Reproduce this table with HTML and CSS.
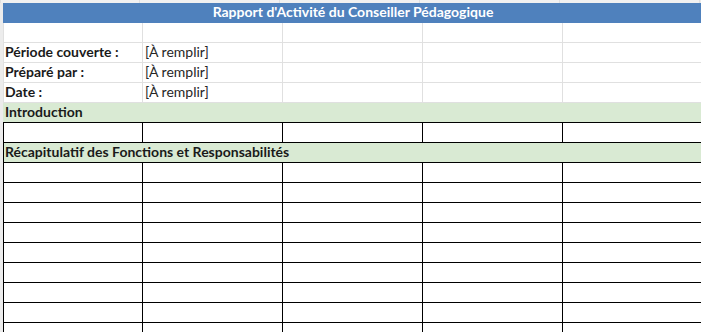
FILE: index.html
```html
<!DOCTYPE html>
<html lang="fr">
<head>
<meta charset="utf-8">
<title>Rapport d'Activité du Conseiller Pédagogique</title>
<link rel="stylesheet" href="styles.css">
</head>
<body>
<div class="sheet">
  <div class="row top">
    <div class="cell"></div><div class="cell"></div><div class="cell"></div><div class="cell"></div><div class="cell"></div>
  </div>
  <div class="row">
    <div class="title">Rapport d'Activité du Conseiller Pédagogique</div>
  </div>
  <div class="row">
    <div class="cell"></div><div class="cell"></div><div class="cell"></div><div class="cell"></div><div class="cell"></div>
  </div>
  <div class="row">
    <div class="cell label">Période couverte :</div><div class="cell value">[À remplir]</div><div class="cell"></div><div class="cell"></div><div class="cell"></div>
  </div>
  <div class="row">
    <div class="cell label">Préparé par :</div><div class="cell value">[À remplir]</div><div class="cell"></div><div class="cell"></div><div class="cell"></div>
  </div>
  <div class="row">
    <div class="cell label">Date :</div><div class="cell value">[À remplir]</div><div class="cell"></div><div class="cell"></div><div class="cell"></div>
  </div>
  <div class="row">
    <div class="section intro">Introduction</div>
  </div>
  <div class="row boxed">
    <div class="cell"></div><div class="cell"></div><div class="cell"></div><div class="cell"></div><div class="cell"></div>
  </div>
  <div class="row">
    <div class="section recap">Récapitulatif des Fonctions et Responsabilités</div>
  </div>
  <div class="row boxed"><div class="cell"></div><div class="cell"></div><div class="cell"></div><div class="cell"></div><div class="cell"></div></div>
  <div class="row boxed"><div class="cell"></div><div class="cell"></div><div class="cell"></div><div class="cell"></div><div class="cell"></div></div>
  <div class="row boxed"><div class="cell"></div><div class="cell"></div><div class="cell"></div><div class="cell"></div><div class="cell"></div></div>
  <div class="row boxed"><div class="cell"></div><div class="cell"></div><div class="cell"></div><div class="cell"></div><div class="cell"></div></div>
  <div class="row boxed"><div class="cell"></div><div class="cell"></div><div class="cell"></div><div class="cell"></div><div class="cell"></div></div>
  <div class="row boxed"><div class="cell"></div><div class="cell"></div><div class="cell"></div><div class="cell"></div><div class="cell"></div></div>
  <div class="row boxed"><div class="cell"></div><div class="cell"></div><div class="cell"></div><div class="cell"></div><div class="cell"></div></div>
  <div class="row boxed"><div class="cell"></div><div class="cell"></div><div class="cell"></div><div class="cell"></div><div class="cell"></div></div>
  <div class="row boxed"><div class="cell"></div><div class="cell"></div><div class="cell"></div><div class="cell"></div><div class="cell"></div></div>
</div>
</body>
</html>
```
FILE: styles.css
```css
html, body {
  margin: 0;
  padding: 0;
  background: #ffffff;
  overflow: hidden;
}

.sheet {
  width: 701px;
  height: 332px;
  box-sizing: border-box;
  padding-left: 3px;
  background: #ececec;
  display: flex;
  flex-direction: column;
  overflow: hidden;
  font-family: Lato, "Open Sans", sans-serif;
  font-size: 14px;
  color: #1a1a1a;
}

.row {
  display: flex;
  flex: none;
  height: 20px;
}

.row.top {
  height: 3px;
  margin-left: -3px;
}

.row.top .cell {
  background: #f1f1f1;
  border-bottom: none;
}

.cell {
  flex: none;
  width: 140px;
  box-sizing: border-box;
  background: #ffffff;
  border-right: 1px solid #e0e0e0;
  border-bottom: 1px solid #e0e0e0;
  line-height: 17px;
  white-space: nowrap;
  overflow: visible;
}

.cell:first-child {
  border-left: 1px solid #e0e0e0;
}

.label {
  font-weight: 700;
  padding-left: 1px;
}

.value {
  padding-left: 2px;
  color: #262626;
}

.title {
  flex: none;
  width: 700px;
  background: #4f81bd;
  color: #ffffff;
  font-weight: 700;
  text-align: center;
  line-height: 18px;
}

.section {
  flex: none;
  width: 700px;
  box-sizing: border-box;
  background: #d9ead3;
  font-weight: 700;
  line-height: 17px;
  white-space: nowrap;
}

.intro {
  padding-left: 2px;
  border-bottom: 1px solid #000000;
}

.recap {
  padding-left: 1px;
  border-left: 1px solid #000000;
  border-bottom: 1px solid #000000;
}

.row.boxed .cell {
  border-right: 1px solid #000000;
  border-bottom: 1px solid #000000;
}

.row.boxed .cell:first-child {
  border-left: 1px solid #000000;
}
```
